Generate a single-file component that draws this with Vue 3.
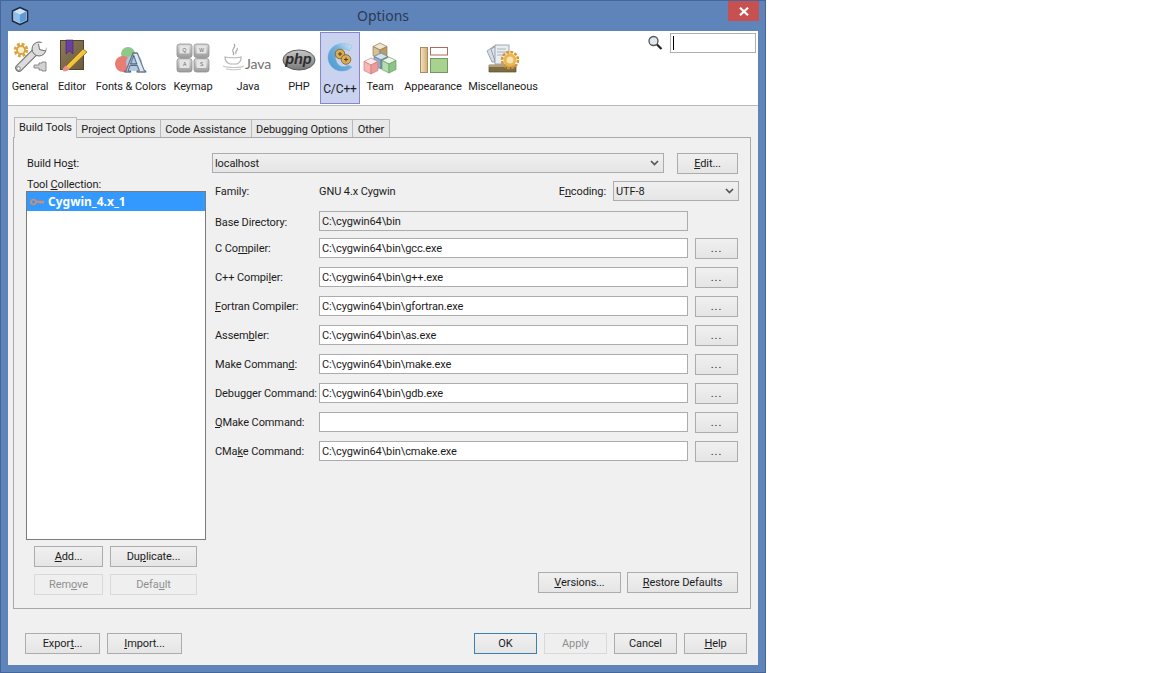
<template>
  <div class="window">
    <!-- title bar -->
    <div class="titlebar">
      <svg class="app-icon" width="18" height="20" viewBox="0 0 18 20">
        <path d="M9 1.500 16.500 5v10L9 18.500 1.500 15V5z" fill="#cfe3f5" stroke="#1d2c44" stroke-width="1.600" stroke-linejoin="round" />
        <path d="M3 5.500 9 8.500v8.500L3 14.300z" fill="#8fc0ea" />
        <path d="M9 8.500 15 5.500v8.800L9 17z" fill="#5d9ad6" />
      </svg>
      <span class="title">Options</span>
      <div class="close">
        <svg width="10" height="9" viewBox="0 0 10 9"><path d="M1 .8 9 8.200M9 .8 1 8.200" stroke="#fff" stroke-width="2.200" /></svg>
      </div>
    </div>

    <div class="content">
      <!-- category toolbar -->
      <div class="toolbar">
        <div class="categories">
          <div class="cat general">
            <svg width="36" height="34" viewBox="0 0 36 34">
              <circle cx="9" cy="10" r="5.500" fill="none" stroke="#d9a441" stroke-width="3.600" stroke-dasharray="2.600 1.700" />
              <circle cx="9" cy="10" r="4" fill="#fbeecb" stroke="#d9a441" stroke-width="1.800" />
              <path d="M7 28 25 10" stroke="#6b6b6b" stroke-width="7.500" stroke-linecap="round" />
              <path d="M7 28 25 10" stroke="#dcdcdc" stroke-width="5.500" stroke-linecap="round" />
              <circle cx="27" cy="9" r="7" fill="#dcdcdc" stroke="#6b6b6b" />
              <path d="M37 0 26 4 27 9 33 11z" fill="#fff" />
              <path d="M26.500 4 27.500 9.500 33.500 11" fill="none" stroke="#6b6b6b" />
              <circle cx="6.500" cy="28.500" r="1.800" fill="#fff" stroke="#6b6b6b" stroke-width=".8" />
              <path d="M22 25h5v-2h3v-1h4v9h-4v-1h-3v-2h-5z" fill="#d2d2d2" stroke="#777" stroke-width=".8" />
            </svg>
            <span>General</span>
          </div>
          <div class="cat editor">
            <svg width="30" height="34" viewBox="0 0 30 34">
              <defs>
                <linearGradient id="gBook" x1="0" y1="0" x2="1" y2="1"><stop offset="0" stop-color="#8d7c5a" /><stop offset="1" stop-color="#6c5c3e" /></linearGradient>
              </defs>
              <rect x="3.500" y="1.500" width="23" height="29" fill="url(#gBook)" stroke="#544729" />
              <path d="M9 1h7v14l-3.500-3-3.500 3z" fill="#6a3fa0" stroke="#41246e" stroke-width=".6" />
              <path d="M26 10 9 27l-1 3.500 4.500-.5L30 13z" fill="#f3c53e" stroke="#7d5a12" stroke-width=".7" />
              <path d="M8.500 26.500 5.500 30l1 2.500 3.500-.5 2.500-2z" fill="#ea8d92" />
            </svg>
            <span>Editor</span>
          </div>
          <div class="cat fonts">
            <svg width="34" height="32" viewBox="0 0 34 32">
              <circle cx="14" cy="10" r="7" fill="#8cc98a" />
              <circle cx="9" cy="20" r="8" fill="#e77d73" />
              <circle cx="20" cy="19" r="8" fill="#a8c9e8" />
              <text x="21" y="28" text-anchor="middle" class="font-a">A</text>
            </svg>
            <span>Fonts &amp; Colors</span>
          </div>
          <div class="cat keymap">
            <svg width="34" height="30" viewBox="0 0 34 30">
              <defs>
                <linearGradient id="gKey" x1="0" y1="0" x2="0" y2="1"><stop offset="0" stop-color="#d6d6d6" /><stop offset="1" stop-color="#9c9c9c" /></linearGradient>
              </defs>
              <g v-for="key in keycaps" :key="key.name">
                <rect :x="key.x" :y="key.y" width="15" height="13.500" rx="2.500" fill="url(#gKey)" stroke="#8f8f8f" stroke-width=".8" />
                <rect :x="key.x + 2.500" :y="key.y + 1.500" width="10" height="8" rx="1" fill="#e4e4e4" />
                <text :x="key.x + 7.500" :y="key.y + 7.500" text-anchor="middle" class="key-cap">{{ key.name }}</text>
              </g>
            </svg>
            <span>Keymap</span>
          </div>
          <div class="cat java">
            <svg width="52" height="30" viewBox="0 0 52 30">
              <g transform="translate(0 2)">
                <path d="M12 0c3 3-3 5-1 8 1 1 1 2 0 3M15 4c2 2-3 3-1 6" fill="none" stroke="#a9a9a9" stroke-width="1.200" />
                <path d="M3 13c3 1 14 1 16 0v1c0 3-2 5-4 6H8c-3-1-5-3-5-7z" fill="none" stroke="#b5b5b5" stroke-width="1.200" />
                <path d="M1 22c5 2 17 2 21 0M4 25c4 1 12 1 15 0" fill="none" stroke="#c5c5c5" stroke-width="1.200" />
              </g>
              <text x="23" y="27" class="java-word">Java</text>
            </svg>
            <span>Java</span>
          </div>
          <div class="cat php">
            <svg width="34" height="24" viewBox="0 0 34 24">
              <defs>
                <linearGradient id="gPhp" x1="0" y1="0" x2="0" y2="1"><stop offset="0" stop-color="#c8c8c8" /><stop offset="1" stop-color="#787878" /></linearGradient>
              </defs>
              <ellipse cx="17" cy="12" rx="16" ry="10" fill="url(#gPhp)" stroke="#5a5a5a" />
              <text x="16.500" y="16" text-anchor="middle" class="php-word">php</text>
            </svg>
            <span>PHP</span>
          </div>
          <div class="cat cpp active">
            <svg width="30" height="32" viewBox="0 0 30 32">
              <defs>
                <linearGradient id="gC" x1="0" y1="1" x2="1" y2="0"><stop offset="0" stop-color="#4b97cf" /><stop offset=".6" stop-color="#6fb0dd" /><stop offset="1" stop-color="#d7e9f6" /></linearGradient>
              </defs>
              <path d="M27 4.500C21-.5 8 .5 4 10c-4 10 4 20 14 19 4 0 7-2 9-4l-4-2c-4 3-10 2-12-5-2-8 6-14 13-9z" fill="url(#gC)" stroke="#8db4d6" stroke-width=".5" />
              <circle cx="15" cy="12" r="4.800" fill="#d8ad5a" stroke="#7b5a1d" stroke-width=".8" />
              <circle cx="21" cy="17.500" r="4.800" fill="#d8ad5a" stroke="#7b5a1d" stroke-width=".8" />
              <path d="M13 12h4M15 10v4M19 17.500h4M21 15.500v4" stroke="#5a3d10" stroke-width="1" />
            </svg>
            <span class="cpp-label">C/C++</span>
          </div>
          <div class="cat team">
            <svg width="34" height="32" viewBox="0 0 34 32">
              <g v-for="cube in cubes" :key="cube.id" :transform="`translate(${cube.x} ${cube.y})`" :stroke="cube.line" stroke-width=".7" stroke-linejoin="round">
                <path d="M7 0l7 3.500L7 7 0 3.500z" :fill="cube.top" />
                <path d="M0 3.500 7 7v9L0 12.500z" :fill="cube.left" />
                <path d="M14 3.500 7 7v9l7-3.500z" :fill="cube.right" />
              </g>
            </svg>
            <span>Team</span>
          </div>
          <div class="cat appearance">
            <svg width="32" height="28" viewBox="0 0 32 28">
              <defs>
                <linearGradient id="gSide" x1="0" y1="0" x2="1" y2="0"><stop offset="0" stop-color="#f3e3c3" /><stop offset="1" stop-color="#d1ad72" /></linearGradient>
              </defs>
              <rect x="3.500" y="2.500" width="7" height="25" fill="url(#gSide)" stroke="#a78d5e" />
              <rect x="13.500" y="2.500" width="17" height="7.500" fill="#fff" stroke="#b06a62" />
              <rect x="13.500" y="13.500" width="17" height="14" fill="#a9d18f" stroke="#6f9c5a" />
            </svg>
            <span>Appearance</span>
          </div>
          <div class="cat misc">
            <svg width="34" height="32" viewBox="0 0 34 32">
              <path d="M1 10 8 5 14 21H6z" fill="#d7dde6" stroke="#7f8791" stroke-width=".7" />
              <path d="M5 8 12 4l10 16H9z" fill="#dfe5ec" stroke="#7f8791" stroke-width=".7" />
              <rect x="9" y="4" width="14" height="19" fill="#e9eef4" stroke="#7f8791" stroke-width=".7" />
              <path d="M11 8h9M11 11h9M11 14h7" stroke="#a8b2bc" />
              <path d="M3 24h27v7H3z" fill="#7d6c44" stroke="#5c4f2c" stroke-width=".7" />
              <path d="M3 24h27v2H3z" fill="#b3a074" />
              <circle cx="24" cy="19" r="8" fill="none" stroke="#d9942a" stroke-width="2.500" stroke-dasharray="2.800 1.400" />
              <circle cx="24" cy="19" r="5" fill="#f7e3b0" stroke="#eab54c" stroke-width="3" />
            </svg>
            <span>Miscellaneous</span>
          </div>
        </div>
        <div class="search">
          <svg width="16" height="16" viewBox="0 0 16 16">
            <circle cx="6.500" cy="6" r="4.500" fill="#dfe8ee" stroke="#555" stroke-width="1.300" />
            <path d="M10 9.500 14.500 14" stroke="#222" stroke-width="2.200" />
          </svg>
          <div class="search-box"><i class="caret"></i></div>
        </div>
      </div>

      <div class="main">
        <!-- tabs -->
        <div class="tabs">
          <div v-for="tab in tabs" :key="tab" class="tab" :class="{ current: tab === 'Build Tools' }">{{ tab }}</div>
        </div>

        <div class="panel">
          <div class="tools">
            <label class="host-label">Build Ho<u>s</u>t:</label>
            <label class="coll-label">Tool <u>C</u>ollection:</label>
            <div class="list">
              <div class="list-row">
                <svg width="15" height="8" viewBox="0 0 15 8">
                  <circle cx="3.500" cy="4" r="2.500" fill="none" stroke="#d98d66" stroke-width="1.700" />
                  <path d="M6 2.700h8v3h-1.500v-1H11v1H9.500v-1H6z" fill="#d98d66" />
                </svg>
                <span>Cygwin_4.x_1</span>
              </div>
            </div>
            <div class="tool-buttons">
              <button class="btn"><u>A</u>dd...</button>
              <button class="btn">Du<u>p</u>licate...</button>
              <button class="btn off">Rem<u>o</u>ve</button>
              <button class="btn off">Defa<u>u</u>lt</button>
            </div>
          </div>

          <div class="settings">
            <div class="host-row">
              <div class="combo host-combo">
                <span>localhost</span>
                <svg width="9" height="6" viewBox="0 0 9 6"><path d="M1 1l3.500 3.500L8 1" fill="none" stroke="#555" stroke-width="1.700" /></svg>
              </div>
              <button class="btn edit"><u>E</u>dit...</button>
            </div>

            <div class="family-row">
              <span class="family-label">Family:</span>
              <span class="family-value">GNU 4.x Cygwin</span>
              <span class="enc-label">E<u>n</u>coding:</span>
              <div class="combo enc-combo">
                <span>UTF-8</span>
                <svg width="9" height="6" viewBox="0 0 9 6"><path d="M1 1l3.500 3.500L8 1" fill="none" stroke="#555" stroke-width="1.700" /></svg>
              </div>
            </div>

            <div class="base-row">
              <span class="row-label">Base Directory:</span>
              <div class="field readonly">C:\cygwin64\bin</div>
            </div>

            <div class="commands">
              <template v-for="cmd in commands" :key="cmd.id">
                <span class="row-label">{{ cmd.label[0] }}<u>{{ cmd.label[1] }}</u>{{ cmd.label[2] }}</span>
                <div class="field">{{ cmd.path }}</div>
                <button class="btn dots">...</button>
              </template>
            </div>

            <div class="panel-actions">
              <button class="btn versions"><u>V</u>ersions...</button>
              <button class="btn restore"><u>R</u>estore Defaults</button>
            </div>
          </div>
        </div>

        <!-- footer buttons -->
        <div class="footer">
          <div class="footer-left">
            <button class="btn wide">Expor<u>t</u>...</button>
            <button class="btn wide"><u>I</u>mport...</button>
          </div>
          <div class="footer-right">
            <button class="btn act default">OK</button>
            <button class="btn act off">Apply</button>
            <button class="btn act">Cancel</button>
            <button class="btn act"><u>H</u>elp</button>
          </div>
        </div>
      </div>
    </div>
  </div>
</template>

<script setup>
const tabs = ['Build Tools', 'Project Options', 'Code Assistance', 'Debugging Options', 'Other']

const keycaps = [
  { name: 'Q', x: 1, y: 1 },
  { name: 'W', x: 18, y: 1 },
  { name: 'A', x: 1, y: 15.5 },
  { name: 'S', x: 18, y: 15.5 }
]

const cubes = [
  { id: 'tan', x: 10, y: 0, top: '#efe4cd', left: '#d8c094', right: '#b79d6c', line: '#8f7a50' },
  { id: 'blue', x: 11, y: 10, top: '#d3e2ef', left: '#8fb0cf', right: '#6b91b6', line: '#5e7d99' },
  { id: 'pink', x: 1, y: 15, top: '#fdeeee', left: '#f7b5b5', right: '#ee9a9a', line: '#c98080' },
  { id: 'green', x: 19, y: 14, top: '#edf6ea', left: '#b4dcae', right: '#8cc386', line: '#6d9e67' }
]

const bin = 'C:\\cygwin64\\bin\\'

// label is split round the mnemonic letter
const commands = [
  { id: 'c', label: ['C Co', 'm', 'piler:'], path: bin + 'gcc.exe' },
  { id: 'cpp', label: ['C++ Compi', 'l', 'er:'], path: bin + 'g++.exe' },
  { id: 'fortran', label: ['', 'F', 'ortran Compiler:'], path: bin + 'gfortran.exe' },
  { id: 'asm', label: ['Assem', 'b', 'ler:'], path: bin + 'as.exe' },
  { id: 'make', label: ['Make Comman', 'd', ':'], path: bin + 'make.exe' },
  { id: 'gdb', label: ['Debu', 'g', 'ger Command:'], path: bin + 'gdb.exe' },
  { id: 'qmake', label: ['', 'Q', 'Make Command:'], path: '' },
  { id: 'cmake', label: ['CMa', 'k', 'e Command:'], path: bin + 'cmake.exe' }
]
</script>

<style>
html,
body {
  background: #fff;
}
</style>

<style scoped>
.window {
  width: 766px;
  height: 673px;
  box-sizing: border-box;
  display: flex;
  flex-direction: column;
  background: #5f84ba;
  border: 1px solid #44669a;
  font-family: Roboto, sans-serif;
  font-size: 11px;
  letter-spacing: -0.1px;
  color: #1c1c1c;
}

.titlebar {
  height: 30px;
  flex: none;
  display: flex;
  justify-content: center;
  position: relative;
}

.app-icon {
  position: absolute;
  left: 10px;
  top: 5px;
}

.title {
  font-family: 'Noto Sans', sans-serif;
  font-size: 14px;
  letter-spacing: 0;
  color: #2b3a55;
  line-height: 30px;
}

.close {
  position: absolute;
  right: 6px;
  top: 0;
  width: 31px;
  height: 20px;
  background: #c75050;
  display: flex;
  align-items: center;
  justify-content: center;
}

.content {
  flex: 1;
  margin: 0 7px 7px;
  display: flex;
  flex-direction: column;
  background: #f0f0f0;
  min-height: 0;
}

.toolbar {
  height: 74px;
  flex: none;
  background: #fff;
  border-bottom: 1px solid #b9b9b9;
  display: flex;
  justify-content: space-between;
}

.categories {
  display: flex;
  padding-top: 1px;
}

.cat {
  height: 72px;
  box-sizing: border-box;
  display: flex;
  flex-direction: column;
  align-items: center;
  justify-content: flex-end;
  padding-bottom: 10px;
  white-space: nowrap;
  line-height: 15px;
}

.cat svg {
  margin-bottom: 7px;
  overflow: visible;
}

.general { width: 44px; }
.editor { width: 40px; }
.fonts { width: 78px; }
.keymap { width: 46px; }
.java { width: 64px; }
.php { width: 38px; }
.cpp { width: 40px; margin-left: 2px; }
.team { width: 40px; }
.appearance { width: 66px; }
.misc { width: 74px; }

.general svg { margin-bottom: 5px; }
.editor svg { margin-bottom: 6px; }
.fonts svg { margin-bottom: 3px; }
.keymap svg { margin-bottom: 6px; }
.team svg { margin-bottom: 4px; }
.appearance svg { margin-bottom: 6px; }
.misc svg { margin-bottom: 6px; }

.cat.active {
  background: #c9d3ef;
  border: 1px solid #8c86c4;
  padding-bottom: 6px;
}

.cat.active svg {
  margin-bottom: 8px;
}

.cpp-label {
  font-size: 12px;
}

.font-a {
  font-family: 'Liberation Serif', serif;
  font-size: 30px;
  font-weight: bold;
  fill: #dfe9f3;
  stroke: #3f4f63;
  stroke-width: .8px;
}

.key-cap {
  font-family: 'Liberation Sans', sans-serif;
  font-size: 5px;
  fill: #666;
}

.java-word {
  font-family: Lato, sans-serif;
  font-size: 14px;
  fill: #707070;
}

.php-word {
  font-family: 'Liberation Sans', sans-serif;
  font-size: 14.500px;
  font-weight: bold;
  font-style: italic;
  fill: #2d2d2d;
}

.search {
  display: flex;
  gap: 7px;
  padding: 2px 2px 0 0;
  align-items: flex-start;
}

.search svg {
  margin-top: 2px;
}

.search-box {
  width: 82px;
  height: 18px;
  background: #fff;
  border: 1px solid #b0b0b0;
  display: flex;
  align-items: center;
  padding-left: 2px;
}

.caret {
  width: 1px;
  height: 14px;
  background: #000;
}

.main {
  flex: 1;
  display: flex;
  flex-direction: column;
  padding: 12px 7px 0 5px;
  min-height: 0;
}

.tabs {
  display: flex;
  align-items: flex-end;
  height: 20px;
  padding-left: 1px;
  flex: none;
  position: relative;
  z-index: 1;
}

.tab {
  height: 18px;
  box-sizing: border-box;
  line-height: 20px;
  padding: 0 4.500px;
  margin-bottom: 1px;
  background: #e9e9e9;
  border: 1px solid #b9b9b9;
  border-bottom: none;
  border-left: none;
  white-space: nowrap;
}

.tab.current {
  height: 21px;
  line-height: 20px;
  padding: 0 4px;
  margin-bottom: 0;
  background: #f0f0f0;
  border-left: 1px solid #b9b9b9;
}

.panel {
  height: 470px;
  flex: none;
  border: 1px solid #a8a8a8;
  margin-top: -1px;
  display: flex;
  background: #f0f0f0;
  box-sizing: content-box;
}

.tools {
  width: 180px;
  margin-left: 12px;
  display: flex;
  flex-direction: column;
  flex: none;
}

.host-label {
  margin: 17px 0 0 1px;
  line-height: 18px;
}

.coll-label {
  margin: 6px 0 0 1px;
  line-height: 12px;
}

.list {
  height: 347px;
  background: #fff;
  border: 1px solid #7b7b7b;
  box-sizing: content-box;
}

.list-row {
  height: 19px;
  background: #3399ff;
  color: #fff;
  font-family: 'Noto Sans', sans-serif;
  font-size: 12px;
  letter-spacing: 0;
  font-weight: 700;
  display: flex;
  align-items: center;
  gap: 3px;
  padding-left: 3px;
}

.tool-buttons {
  display: grid;
  grid-template-columns: 69px 87px;
  grid-auto-rows: 21px;
  gap: 7px 7px;
  margin: 6px 0 0 8px;
}

.btn {
  box-sizing: border-box;
  font: inherit;
  letter-spacing: inherit;
  color: #1c1c1c;
  padding: 0;
  height: 21px;
  border: 1px solid #acacac;
  background: linear-gradient(#f0f0f0, #e5e5e5);
  white-space: nowrap;
}

.btn.off {
  color: #8f8f8f;
  background: #efefef;
  border-color: #d9d9d9;
}

.btn.default {
  border-color: #3c7fb1;
}

.settings {
  flex: 1;
  margin-left: 6px;
  margin-right: 12px;
  display: flex;
  flex-direction: column;
}

.host-row {
  display: flex;
  justify-content: space-between;
  margin-top: 15px;
}

.combo {
  box-sizing: border-box;
  height: 20px;
  border: 1px solid #acacac;
  background: linear-gradient(#f0f0f0, #e5e5e5);
  display: flex;
  align-items: center;
  justify-content: space-between;
  padding: 0 4px 0 2px;
}

.host-combo {
  width: 452px;
}

.enc-combo {
  width: 126px;
  margin-right: -1px;
}

.edit {
  width: 61px;
}

.family-row {
  display: flex;
  align-items: center;
  height: 20px;
  margin-top: 7px;
  padding-left: 3px;
}

.family-label {
  width: 104px;
}

.family-value {
  flex: 1;
}

.enc-label {
  margin-right: 7px;
}

.base-row {
  display: flex;
  align-items: center;
  margin-top: 10px;
  padding-left: 3px;
}

.base-row .row-label {
  width: 104px;
  padding-top: 2px;
}

.row-label {
  white-space: nowrap;
}

.field {
  box-sizing: border-box;
  height: 20px;
  line-height: 20px;
  padding-left: 2px;
  background: #fff;
  border: 1px solid #acacac;
  color: #1c1c1c;
}

.base-row .field {
  width: 369px;
}

.field.readonly {
  background: #f0f0f0;
}

.commands {
  display: grid;
  grid-template-columns: 104px 369px 43px;
  grid-auto-rows: 20px;
  row-gap: 9px;
  column-gap: 0;
  align-items: center;
  margin-top: 7px;
  padding-left: 3px;
}

.dots {
  margin-left: 7px;
  width: 43px;
  letter-spacing: 1px;
}

.panel-actions {
  margin-top: auto;
  margin-bottom: 15px;
  display: flex;
  justify-content: flex-end;
  gap: 6px;
}

.versions {
  width: 83px;
}

.restore {
  width: 111px;
}

.footer {
  display: flex;
  justify-content: space-between;
  padding: 24px 4px 0 12px;
}

.footer-left,
.footer-right {
  display: flex;
  gap: 7px;
}

.wide {
  width: 75px;
}

.act {
  width: 63px;
}
</style>
